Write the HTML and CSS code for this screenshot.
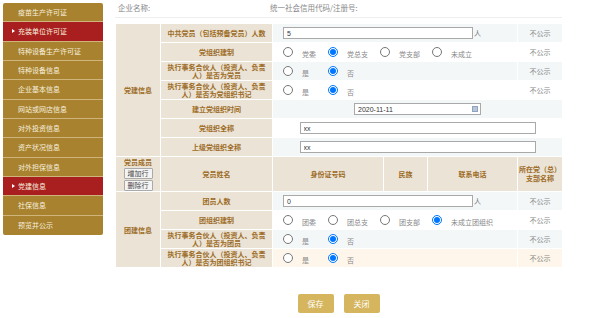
FILE: index.html
```html
<!DOCTYPE html>
<html lang="zh-CN">
<head>
    <meta charset="UTF-8">
    <title>党建信息</title>
    <link rel="stylesheet" href="styles.css">
</head>
<body>
    <div class="page">
        <ul class="side-menu">
            <li>疫苗生产许可证</li>
            <li class="active">充装单位许可证</li>
            <li>特种设备生产许可证</li>
            <li>特种设备信息</li>
            <li>企业基本信息</li>
            <li>网站或网店信息</li>
            <li>对外投资信息</li>
            <li>资产状况信息</li>
            <li>对外担保信息</li>
            <li class="active">党建信息</li>
            <li>社保信息</li>
            <li>预览并公示</li>
        </ul>

        <div class="main">
            <div class="company-head">
                <span class="company-name">企业名称:</span>
                <span>统一社会信用代码/注册号:</span>
            </div>

            <table class="info-table">
                <colgroup>
                    <col style="width:45px">
                    <col style="width:112px">
                    <col style="width:111px">
                    <col style="width:44px">
                    <col style="width:90px">
                    <col style="width:45px">
                </colgroup>
                <tr class="light">
                    <td class="group" rowspan="7">党建信息</td>
                    <td class="label">中共党员（包括预备党员）人数</td>
                    <td class="value" colspan="3"><input type="text" class="num-input" value="5"><span class="unit">人</span></td>
                    <td class="public">不公示</td>
                </tr>
                <tr>
                    <td class="label">党组织建制</td>
                    <td class="value" colspan="3">
                        <div class="radio-group">
                            <label><input type="radio" name="dzz"><span>党委</span></label>
                            <label><input type="radio" name="dzz" checked><span>党总支</span></label>
                            <label><input type="radio" name="dzz"><span>党支部</span></label>
                            <label><input type="radio" name="dzz"><span>未成立</span></label>
                        </div>
                    </td>
                    <td class="public">不公示</td>
                </tr>
                <tr class="light">
                    <td class="label two-line">执行事务合伙人（投资人、负责人）是否为党员</td>
                    <td class="value" colspan="3">
                        <div class="radio-group">
                            <label><input type="radio" name="sfdy"><span>是</span></label>
                            <label><input type="radio" name="sfdy" checked><span>否</span></label>
                        </div>
                    </td>
                    <td class="public">不公示</td>
                </tr>
                <tr>
                    <td class="label two-line">执行事务合伙人（投资人、负责人）是否为党组织书记</td>
                    <td class="value" colspan="3">
                        <div class="radio-group">
                            <label><input type="radio" name="sfsj"><span>是</span></label>
                            <label><input type="radio" name="sfsj" checked><span>否</span></label>
                        </div>
                    </td>
                    <td class="public">不公示</td>
                </tr>
                <tr class="light">
                    <td class="label">建立党组织时间</td>
                    <td class="value center" colspan="4">
                        <span class="date-box"><input type="text" class="date-input" value="2020-11-11"><i class="cal-icon"></i></span>
                    </td>
                </tr>
                <tr>
                    <td class="label">党组织全称</td>
                    <td class="value center" colspan="4"><input type="text" class="wide-input" value="xx"></td>
                </tr>
                <tr class="light">
                    <td class="label">上级党组织全称</td>
                    <td class="value center" colspan="4"><input type="text" class="wide-input" value="xx"></td>
                </tr>
                <tr class="head-row">
                    <td class="group members">
                        <div>党员成员</div>
                        <button class="row-btn">增加行</button>
                        <button class="row-btn">删除行</button>
                    </td>
                    <td>党员姓名</td>
                    <td>身份证号码</td>
                    <td>民族</td>
                    <td>联系电话</td>
                    <td>所在党（总）支部名称</td>
                </tr>
                <tr class="light">
                    <td class="group" rowspan="4">团建信息</td>
                    <td class="label">团员人数</td>
                    <td class="value" colspan="3"><input type="text" class="num-input" value="0"><span class="unit">人</span></td>
                    <td class="public">不公示</td>
                </tr>
                <tr>
                    <td class="label">团组织建制</td>
                    <td class="value" colspan="3">
                        <div class="radio-group">
                            <label><input type="radio" name="tzz"><span>团委</span></label>
                            <label><input type="radio" name="tzz"><span>团总支</span></label>
                            <label><input type="radio" name="tzz"><span>团支部</span></label>
                            <label><input type="radio" name="tzz" checked><span>未成立团组织</span></label>
                        </div>
                    </td>
                    <td class="public">不公示</td>
                </tr>
                <tr class="light">
                    <td class="label two-line">执行事务合伙人（投资人、负责人）是否为团员</td>
                    <td class="value" colspan="3">
                        <div class="radio-group">
                            <label><input type="radio" name="sfty"><span>是</span></label>
                            <label><input type="radio" name="sfty" checked><span>否</span></label>
                        </div>
                    </td>
                    <td class="public">不公示</td>
                </tr>
                <tr class="hover">
                    <td class="label two-line">执行事务合伙人（投资人、负责人）是否为团组织书记</td>
                    <td class="value" colspan="3">
                        <div class="radio-group">
                            <label><input type="radio" name="tsj"><span>是</span></label>
                            <label><input type="radio" name="tsj" checked><span>否</span></label>
                        </div>
                    </td>
                    <td class="public">不公示</td>
                </tr>
            </table>

            <div class="actions">
                <button class="gold-btn">保存</button>
                <button class="gold-btn">关闭</button>
            </div>
        </div>
    </div>
</body>
</html>
```

FILE: styles.css
```css
* {
    box-sizing: border-box;
}

body {
    margin: 0;
    background: #fff;
    color: #777;
    font-family: "Noto Sans CJK SC", "Liberation Sans", sans-serif;
    font-size: 7px;
}

.page {
    display: flex;
    align-items: flex-start;
    padding: 3px 0 0 3px;
}

/* left menu */
.side-menu {
    width: 100px;
    margin: 0;
    padding: 0;
    list-style: none;
    background: #a8822f;
    border-radius: 2px;
}

.side-menu li {
    position: relative;
    height: 19.35px;
    line-height: 18px;
    padding-left: 15px;
    border-bottom: 1px solid #cfb57c;
    color: #f7efde;
}

.side-menu li:last-child {
    border-bottom: none;
}

.side-menu li.active {
    background: #a91e1f;
}

.side-menu li.active::before {
    content: "";
    position: absolute;
    left: 9px;
    top: 7px;
    border-left: 3px solid #fff;
    border-top: 2.5px solid transparent;
    border-bottom: 2.5px solid transparent;
}

/* main */
.main {
    width: 447px;
    margin-left: 12px;
}

.company-head {
    display: flex;
    height: 15px;
    line-height: 10px;
    padding-left: 3px;
    border-bottom: 1px solid #eeeeee;
    color: #888;
    font-size: 7.5px;
}

.company-name {
    width: 152px;
}

.info-table {
    width: 447px;
    margin-top: 5px;
    border-collapse: collapse;
    table-layout: fixed;
}

.info-table td {
    height: 19px;
    padding: 0;
    border: 1px solid #fff;
    text-align: center;
    vertical-align: middle;
}

.info-table .group,
.info-table .label,
.head-row td {
    background: #ebe3d5;
    color: #9c6b26;
    font-weight: bold;
}

.info-table .two-line {
    line-height: 8.5px;
    padding: 0 4px;
}

.info-table .value {
    text-align: left;
    padding-left: 10px;
    background: #fff;
}

.info-table .value.center {
    text-align: center;
    padding-left: 0;
}

.info-table .public {
    border-left: 1px solid #ebebeb;
    background: #fff;
    color: #888;
}

.info-table tr.light .value,
.info-table tr.light .public {
    background: #f3f7f8;
}

.info-table tr.hover .value,
.info-table tr.hover .public {
    background: #fef6ea;
}

.head-row td {
    height: 35px;
    line-height: 9px;
}

.members {
    vertical-align: top !important;
    padding-top: 1px !important;
}

.row-btn {
    display: block;
    width: 29px;
    height: 11px;
    margin: 1px auto 0;
    padding: 0;
    border: 1px solid #aaa;
    border-radius: 1px;
    background: #f4f4f4;
    color: #444;
    font-family: inherit;
    font-size: 7px;
    font-weight: normal;
    line-height: 9px;
}

/* inputs */
input[type="text"] {
    height: 12px;
    padding: 0 3px;
    border: 1px solid #a9a9a9;
    background: #fff;
    color: #333;
    font-family: "Liberation Sans", sans-serif;
    font-size: 7px;
    vertical-align: middle;
}

.num-input {
    width: 190px;
}

.unit {
    margin-left: 1px;
    vertical-align: middle;
}

.date-box {
    position: relative;
    display: inline-block;
}

.date-input {
    width: 127px;
}

.cal-icon {
    position: absolute;
    right: 3px;
    top: 3px;
    width: 6px;
    height: 6px;
    background: #b9c6d8;
    border: 1px solid #8fa3bf;
}

.wide-input {
    width: 236px;
}

.radio-group {
    display: flex;
    align-items: center;
}

.radio-group label {
    display: flex;
    align-items: center;
    margin-right: 12px;
    color: #888;
}

.radio-group input {
    width: 10px;
    height: 10px;
    margin: 0 9px 0 0;
}

.radio-group span {
    min-width: 14px;
    margin-top: 4px;
}

.actions {
    display: flex;
    justify-content: center;
    gap: 10px;
    margin-top: 26px;
}

.gold-btn {
    width: 36px;
    height: 19px;
    padding: 0;
    border: none;
    border-radius: 2px;
    background: #d5b55e;
    color: #fff;
    font-family: inherit;
    font-size: 8px;
}
```
